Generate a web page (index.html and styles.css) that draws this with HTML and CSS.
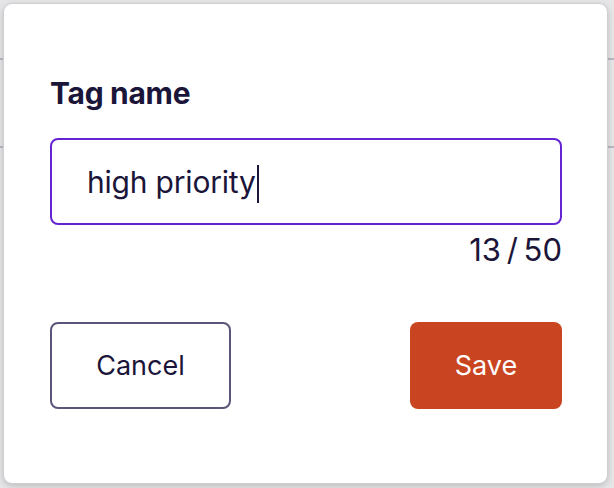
FILE: index.html
```html
<!DOCTYPE html>
<html>
<head>
<meta charset="utf-8">
<link rel="stylesheet" href="styles.css">
</head>
<body>
<div class="backdrop">
  <div class="dialog">
    <div class="label">Tag name</div>
    <div class="input"><span class="value">high priority</span><span class="caret"></span></div>
    <div class="counter">13 / 50</div>
    <div class="actions">
      <button class="btn cancel">Cancel</button>
      <button class="btn save">Save</button>
    </div>
  </div>
</div>
</body>
</html>
```

FILE: styles.css
```css
html, body {
  margin: 0;
  padding: 0;
}
body {
  width: 614px;
  height: 488px;
  overflow: hidden;
  background-color: #e6e6e8;
  background-image:
    linear-gradient(to bottom, transparent 58px, #b9b9c4 58px, #b9b9c4 60px, transparent 60px),
    linear-gradient(to bottom, transparent 146px, #b9b9c4 146px, #b9b9c4 148px, transparent 148px);
  font-family: "Inter", "Noto Sans", sans-serif;
  color: #1b1539;
}
.backdrop {
  padding: 3px;
}
.dialog {
  box-sizing: border-box;
  width: 605px;
  height: 481px;
  background: #fff;
  border: 1px solid #cfcfd2;
  border-radius: 9px;
  box-shadow: 0 2px 6px rgba(0, 0, 0, 0.18);
  padding: 69px 45px 0 46px;
}
.label {
  font-size: 30px;
  font-weight: 700;
  line-height: 40px;
  letter-spacing: -0.3px;
}
.input {
  margin-top: 25px;
  box-sizing: border-box;
  height: 87px;
  border: 2px solid #6424d2;
  border-radius: 8px;
  display: flex;
  align-items: center;
  padding-left: 35px;
  font-size: 30px;
  letter-spacing: -0.2px;
}
.caret {
  width: 2px;
  height: 38px;
  background: #1b1539;
  margin-left: 1px;
  margin-top: 4px;
}
.counter {
  text-align: right;
  font-size: 31px;
  line-height: 40px;
  margin-top: 5px;
  word-spacing: -3px;
}
.actions {
  display: flex;
  justify-content: space-between;
  margin-top: 52px;
}
.btn {
  box-sizing: border-box;
  height: 87px;
  border-radius: 8px;
  font-family: inherit;
  font-size: 27px;
  padding: 0;
}
.cancel {
  width: 181px;
  background: #fff;
  border: 2px solid #5a5678;
  color: #1b1539;
}
.save {
  width: 152px;
  background: #c94521;
  border: none;
  color: #fff;
}
```
